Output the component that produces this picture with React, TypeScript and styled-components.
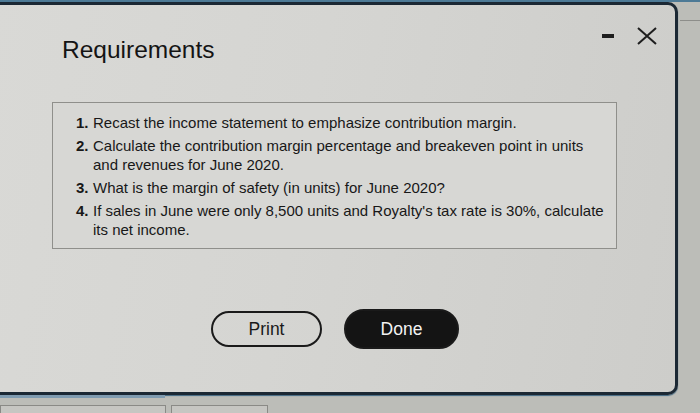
import React from "react";
import styled, { createGlobalStyle } from "styled-components";

const Global = createGlobalStyle`
  html, body { margin: 0; padding: 0; }
  body { background: #b9bab5; font-family: "Liberation Sans", Arial, Helvetica, sans-serif; }
`;

const Page = styled.div`
  width: 700px;
  height: 413px;
  overflow: hidden;
  display: flex;
  flex-direction: column;
  background: #bcbdb8;
`;

const TopStrip = styled.div`
  height: 2px;
  flex: none;
  background: #4d7a96;
`;

const Middle = styled.div`
  display: flex;
  flex: none;
  height: 393px;
`;

const Dialog = styled.div`
  box-sizing: border-box;
  flex: none;
  width: 688px;
  height: 393px;
  margin-left: -10px;
  border: 3px solid #1b2834;
  border-radius: 10px;
  box-shadow: 0 1px 1px #3f6782;
  background: linear-gradient(100deg, #d9d9d6 0%, #d5d5d2 45%, #cdcdca 100%);
  display: flex;
  flex-direction: column;
`;

const Header = styled.div`
  display: flex;
  justify-content: space-between;
  align-items: flex-start;
  padding: 22px 18px 0 69px;
`;

const Title = styled.h1`
  margin: 11px 0 0;
  font-size: 24.5px;
  line-height: 24px;
  font-weight: 400;
  color: #141414;
`;

const WindowButtons = styled.div`
  display: flex;
  align-items: center;
  gap: 23px;
  height: 18px;
`;

const Minimize = styled.span`
  display: block;
  width: 12px;
  height: 4px;
  background: #1e1e1e;
`;

const Panel = styled.div`
  margin: 40px 0 0 59px;
  width: 565px;
  box-sizing: border-box;
  border: 1px solid #8f8f8b;
  background: #d7d7d4;
  padding: 10px 10px 9px 23px;
`;

const List = styled.ol`
  list-style: none;
  margin: 0;
  padding: 0;
  display: flex;
  flex-direction: column;
  gap: 4px;
`;

const Item = styled.li`
  display: grid;
  grid-template-columns: 17px 1fr;
  font-size: 15px;
  line-height: 19px;
  color: #181818;
`;

const Num = styled.span`
  font-weight: 700;
`;

const Actions = styled.div`
  display: flex;
  justify-content: center;
  align-items: center;
  gap: 22px;
  margin-top: 60px;
  padding-left: 2px;
`;

const Button = styled.button<{ $primary?: boolean }>`
  box-sizing: border-box;
  width: ${(p) => (p.$primary ? "115px" : "111px")};
  height: ${(p) => (p.$primary ? "40px" : "36px")};
  border-radius: 20px;
  border: 2px solid #1a1a1a;
  background: ${(p) => (p.$primary ? "#141414" : "transparent")};
  color: ${(p) => (p.$primary ? "#f2f2f2" : "#1a1a1a")};
  font-family: "Liberation Sans", Arial, sans-serif;
  font-size: 17.5px;
  padding: 0;
  cursor: pointer;
`;

const Side = styled.div`
  flex: 1;
  display: flex;
  flex-direction: column;
  padding-top: 18px;
`;

const SideLine = styled.div`
  height: 1px;
  margin-left: 2px;
  background: #8d8e8a;
`;

const Bottom = styled.div`
  flex: 1;
  display: flex;
  flex-direction: column;
`;

const Accent = styled.div`
  width: 165px;
  height: 3px;
  background: #7f9bb0;
`;

const Tabs = styled.div`
  display: flex;
  gap: 5px;
  margin-top: 7px;
  flex: 1;
`;

const Tab = styled.div<{ $w: number }>`
  width: ${(p) => p.$w}px;
  box-sizing: border-box;
  border: 1px solid #8a8a86;
  border-bottom: none;
  background: #c6c6c2;
`;

const items: string[][] = [
  ["1.", "Recast the income statement to emphasize contribution margin."],
  [
    "2.",
    "Calculate the contribution margin percentage and breakeven point in units and revenues for June 2020.",
  ],
  ["3.", "What is the margin of safety (in units) for June 2020?"],
  [
    "4.",
    "If sales in June were only 8,500 units and Royalty's tax rate is 30%, calculate its net income.",
  ],
];

export default function App() {
  return (
    <>
      <Global />
      <Page>
        <TopStrip />
        <Middle>
          <Dialog>
            <Header>
              <Title>Requirements</Title>
              <WindowButtons>
                <Minimize />
                <svg width="20" height="18" viewBox="0 0 20 18">
                  <path d="M1 1 L19 17 M19 1 L1 17" stroke="#1e1e1e" strokeWidth="2" fill="none" />
                </svg>
              </WindowButtons>
            </Header>
            <Panel>
              <List>
                {items.map(([n, t]) => (
                  <Item key={n}>
                    <Num>{n}</Num>
                    <span>{t}</span>
                  </Item>
                ))}
              </List>
            </Panel>
            <Actions>
              <Button>Print</Button>
              <Button $primary>Done</Button>
            </Actions>
          </Dialog>
          <Side>
            <SideLine />
          </Side>
        </Middle>
        <Bottom>
          <Accent />
          <Tabs>
            <Tab $w={166} />
            <Tab $w={97} />
          </Tabs>
        </Bottom>
      </Page>
    </>
  );
}
